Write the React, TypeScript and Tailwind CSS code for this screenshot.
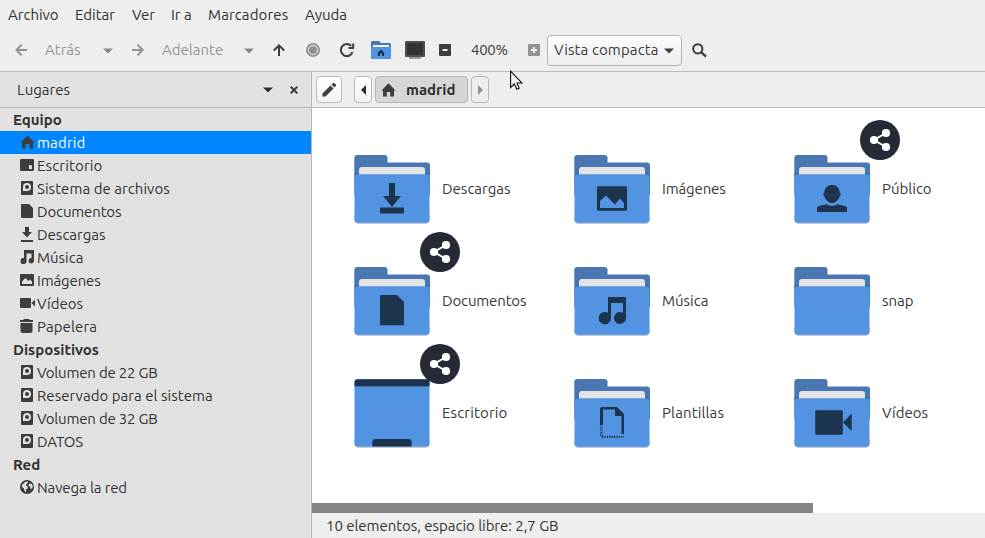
import type { ReactNode } from 'react';

type PlaceKind = 'home' | 'desktop' | 'disk' | 'doc' | 'down' | 'music' | 'image' | 'video' | 'trash' | 'globe';

function PlaceIcon({ kind }: { kind: PlaceKind }) {
  const glyphs: Record<PlaceKind, ReactNode> = {
    home: <path d="M7.5 .5 14.5 7.5H13v6H9.5V9h-4v4.500H2v-6H.5z" />,
    desktop: <path fillRule="evenodd" d="M1 1h12a1 1 0 0 1 1 1v10a1 1 0 0 1-1 1H1a1 1 0 0 1-1-1V2a1 1 0 0 1 1-1zM9 7v4h3V8l-1-1z" />,
    disk: (
      <path
        fillRule="evenodd"
        d="M2 0h10a1 1 0 0 1 1 1v12a1 1 0 0 1-1 1H2a1 1 0 0 1-1-1V1a1 1 0 0 1 1-1zM7 2a4 4 0 0 0-4 4v4h4a4 4 0 0 0 0-8zM7 4a2 2 0 1 1 0 4 2 2 0 0 1 0-4z"
      />
    ),
    doc: <path d="M2 0h7l4 4v9a1 1 0 0 1-1 1H2a1 1 0 0 1-1-1V1a1 1 0 0 1 1-1z" />,
    down: <path d="M5 0h4v5h3L7 10.500 2 5h3zM1 13h12v2H1z" />,
    music: <path d="M5 0h9v10.500A2.700 2.700 0 1 1 11.500 8V3.500h-5v7A3 3 0 1 1 4 8V0z" />,
    image: <path fillRule="evenodd" d="M1 1h12a1 1 0 0 1 1 1v10a1 1 0 0 1-1 1H1a1 1 0 0 1-1-1V2a1 1 0 0 1 1-1zM2 11h10V8.500l-2-2L8.500 8 5.500 5 2 8.500z" />,
    video: <path d="M1 2h9a1 1 0 0 1 1 1v8a1 1 0 0 1-1 1H1a1 1 0 0 1-1-1V3a1 1 0 0 1 1-1zM11.500 7 15 3.500v7z" />,
    trash: <path d="M4 0h5l1 1h3v2H0V1h3zM.5 4h12v7.500a2.500 2.500 0 0 1-2.500 2.500H3a2.500 2.500 0 0 1-2.500-2.500z" />,
    globe: (
      <g>
        <circle cx="7" cy="7" r="7" />
        <path fill="#e1e1e1" d="M2 5l3-3 3-.500-.5 2L5.500 5l1.500 1 1 2-2 1.500v3L4.500 11 4 8.500 2 7zM9 4l2.500-.5L13 6.500l-1.500 2.500L10 8l.5-1.500L8.500 6z" />
      </g>
    ),
  };
  return (
    <svg width="16" height="15" viewBox="0 0 16 15" className="shrink-0" fill="#3d3d3d">
      {glyphs[kind]}
    </svg>
  );
}

function Heading({ children }: { children: ReactNode }) {
  return <div className="h-[23px] pl-[13px] font-bold leading-[23px]">{children}</div>;
}

function Place({ kind, label, selected, tracking = '' }: { kind: PlaceKind; label: string; selected?: boolean; tracking?: string }) {
  return (
    <div className={selected ? 'flex h-[23px] items-center gap-px bg-[#0086ff] pl-5 text-white' : 'flex h-[23px] items-center gap-px pl-5'}>
      <PlaceIcon kind={kind} />
      <span className={`whitespace-nowrap leading-[23px] ${tracking}`}>{label}</span>
    </div>
  );
}

type Emblem = 'down' | 'image' | 'person' | 'doc' | 'music' | 'none' | 'template' | 'video';

function EmblemShape({ kind }: { kind: Emblem }) {
  if (kind === 'down') return <path d="M35 28h6v13h6L38 52 29 41h6zM26 52.500h24v6H26z" />;
  if (kind === 'doc') return <path d="M27 28h16l7 7v22a1.300 1.300 0 0 1-1.300 1.300H27.300A1.300 1.300 0 0 1 26 57V29a1 1 0 0 1 1-1z" />;
  if (kind === 'image')
    return <path fillRule="evenodd" d="M24.500 31.300h27A1.500 1.500 0 0 1 53 32.800v21.400a1.500 1.500 0 0 1-1.500 1.500h-27a1.500 1.500 0 0 1-1.500-1.500V32.800a1.500 1.500 0 0 1 1.500-1.500zM26 53h24v-5l-4-4.500-5 6-9-9-6 5.500z" />;
  if (kind === 'music')
    return <path d="M34 30h18v21a6 6 0 1 1-3-5.200V36H37v15a6.200 6.200 0 1 1-3-5.200z" />;
  if (kind === 'person')
    return <path d="M38 30c5 0 7.700 3.500 7.700 7.500L47 39l-1.500 3c-1.500 3.500-4.500 6-7.500 6s-6-2.500-7.500-6L29 39l1.300-1.500c0-4 2.700-7.500 7.700-7.500zM33 49.300c3 2.200 7 2.200 10 0l8 1.700c1.300.4 2 1.200 2 2V56a1 1 0 0 1-1 1H24a1 1 0 0 1-1-1v-3c0-.8.700-1.600 2-2z" />;
  if (kind === 'template')
    return (
      <g>
        <path d="M27.500 28H43l7 7v20h-2.500V37H41v-6.500H29V46h-3V29.500A1.500 1.500 0 0 1 27.500 28z" />
        <path d="M26.500 46v12M28 57.300h20" fill="none" stroke="#1d344f" strokeWidth="1.200" strokeDasharray="1.200 1.200" />
        <path d="M28 46.800v12M27 58.300h21M49.400 56v3" fill="none" stroke="#1d344f" strokeWidth="1.200" strokeDasharray="1.200 1.200" strokeDashoffset="1.200" />
      </g>
    );
  if (kind === 'video')
    return <path d="M22.500 31.300h25a1.300 1.300 0 0 1 1.300 1.300v21.800a1.300 1.300 0 0 1-1.300 1.300h-25a1.300 1.300 0 0 1-1.300-1.300V32.600a1.300 1.300 0 0 1 1.300-1.300zM49 43.500l8.700-9V52z" />;
  return null;
}

function FolderArt({ kind }: { kind: Emblem }) {
  return (
    <svg width="76" height="69" viewBox="0 0 76 69" className="shrink-0">
      <path d="M.5 60h75v5a3.500 3.500 0 0 1-3.500 3.700H4A3.500 3.500 0 0 1 .5 65z" fill="#9db4cf" />
      <path d="M3.500 0h27A3 3 0 0 1 33.500 3v4.500H73a3 3 0 0 1 3 3V40H.3V3.200A3.200 3.200 0 0 1 3.500 0z" fill="#4877b1" />
      <path d="M.5 23v-2q0-2.500 2.500-2.500h70.500q2 0 2 2.500v2z" fill="#315f98" />
      <path d="M8 12h60a3 3 0 0 1 3 3v8H5v-8a3 3 0 0 1 3-3z" fill="#e4e4e4" />
      <path d="M3.500 19.300h69a3 3 0 0 1 3 3v42a3.200 3.200 0 0 1-3.200 3.200H3.700A3.200 3.200 0 0 1 .5 64.300v-42a3 3 0 0 1 3-3z" fill="#5294e2" />
      <g fill="#1d344f"><EmblemShape kind={kind} /></g>
    </svg>
  );
}

function DesktopArt() {
  return (
    <svg width="76" height="69" viewBox="0 0 76 69" className="shrink-0">
      <path d="M.5 60h75v5a3.500 3.500 0 0 1-3.500 3.700H4A3.500 3.500 0 0 1 .5 65z" fill="#b5bdc8" />
      <rect x=".5" y=".3" width="75" height="67.200" rx="3.200" fill="#5294e2" />
      <path d="M3.700.3h68.600a3.200 3.200 0 0 1 3.200 3.200V7H.5V3.500A3.200 3.200 0 0 1 3.700.3z" fill="#1d344f" />
      <path d="M.5 7h75v.8H.5z" fill="#3d6ca5" />
      <path d="M18.300 67.500V63a3 3 0 0 1 3-3h33.400a3 3 0 0 1 3 3v4.500z" fill="#1d344f" />
    </svg>
  );
}

function ShareBadge() {
  return (
    <svg width="40" height="40" viewBox="0 0 40 40" className="absolute -top-[35px] left-[66px]">
      <circle cx="20" cy="20" r="20" fill="#252a35" />
      <path d="M26 13 14 20l12 7" fill="none" stroke="#fff" strokeWidth="2" />
      <g fill="#fff">
        <circle cx="14" cy="20" r="4.100" />
        <circle cx="26" cy="13" r="4.100" />
        <circle cx="26" cy="27" r="4.100" />
      </g>
    </svg>
  );
}

function Item({ label, children, shared, tracking = '' }: { label: string; children: ReactNode; shared?: boolean; tracking?: string }) {
  return (
    <div className="relative flex h-[69px] items-center gap-3">
      {children}
      <span className={`whitespace-nowrap pb-0.5 text-[#383838] ${tracking}`}>{label}</span>
      {shared && <ShareBadge />}
    </div>
  );
}

function Caret({ className, fill }: { className: string; fill: string }) {
  return (
    <svg width="10" height="6" viewBox="0 0 10 6" className={className} fill={fill}>
      <path d="M0 .5h10L5 5.500z" />
    </svg>
  );
}

function Toolbar() {
  return (
    <div className="flex h-[41px] items-center pt-px pb-1 text-[#969696]">
      <svg width="12" height="12" viewBox="0 0 12 12" className="mt-0.5 ml-[15px] shrink-0" fill="none" stroke="#929292" strokeWidth="2">
        <path d="M6 .8.9 6 6 11.200M1 6h11" transform="translate(.6)" />
      </svg>
      <span className="ml-[18px] w-[58px] pt-0.5">Atrás</span>
      <Caret className="mt-1 shrink-0" fill="#888" />
      <svg width="12" height="12" viewBox="0 0 12 12" className="mt-0.5 ml-[19px] shrink-0" fill="none" stroke="#929292" strokeWidth="2">
        <path d="M5.500.8 10.600 6 5.500 11.200M0 6h10.500" />
      </svg>
      <span className="ml-[18px] w-[82px] pt-0.5">Adelante</span>
      <Caret className="mt-1 shrink-0" fill="#888" />
      <svg width="12" height="12" viewBox="0 0 12 12" className="mt-0.5 ml-[19px] shrink-0" fill="none" stroke="#3d3d3d" strokeWidth="2">
        <path d="M.8 6.500 6 1.400l5.200 5.100M6 1.500V12" />
      </svg>
      <svg width="14" height="14" viewBox="0 0 14 14" className="mt-0.5 ml-[21px] shrink-0">
        <circle cx="7" cy="7" r="6" fill="none" stroke="#929292" strokeWidth="2" />
        <circle cx="7" cy="7" r="4.100" fill="#929292" />
      </svg>
      <svg width="15" height="14" viewBox="0 0 15 14" className="mt-0.5 ml-5 shrink-0" fill="none" stroke="#3d3d3d" strokeWidth="2">
        <path d="M12.500 9.200A6 6 0 1 1 11.200 2.900" />
        <path d="M13.200.5V5H8.500" />
      </svg>
      <svg width="20" height="18" viewBox="0 0 20 18" className="mt-0.5 ml-4 shrink-0">
        <path d="M1 0h7.500l1 2H19l1 1v6H0V1z" fill="#4877b1" />
        <path d="M2 4h16v2H2z" fill="#f1f3f6" />
        <path d="M0 6h20v11.500q0 .5-.5.5H.5q-.5 0-.5-.5z" fill="#5294e2" />
        <path d="M10 8.500 14 12.500h-1V15h-2v-2.500H9V15H7v-2.500H6z" fill="#1d344f" />
      </svg>
      <svg width="20" height="18" viewBox="0 0 20 18" className="mt-0.5 ml-3.5 shrink-0">
        <path d="M4 15h12v3H4z" fill="#999" />
        <rect width="20" height="16" rx=".8" fill="#4f4f4f" />
        <path d="M2 2h16v12H2z" fill="#333" />
      </svg>
      <svg width="12" height="12" viewBox="0 0 12 12" className="mt-0.5 ml-3.5 shrink-0">
        <rect width="12" height="12" rx="1" fill="#3d3d3d" />
        <path d="M3.500 5h5v2h-5z" fill="#eee" />
      </svg>
      <span className="ml-5 w-[57px] pt-0.5 tracking-[-0.3px] text-[#3c3c3c]">400%</span>
      <svg width="12" height="12" viewBox="0 0 12 12" className="mt-0.5 shrink-0">
        <rect width="12" height="12" rx="1" fill="#929292" />
        <path d="M5 3h2v2h2v2H7v2H5V7H3V5h2z" fill="#eee" />
      </svg>
      <div className="mt-0.5 ml-[7px] flex h-[31px] w-[135px] shrink-0 items-center justify-between rounded-[4px] border border-[#b4b4b4] bg-gradient-to-b from-[#fdfdfd] to-[#ececec] pr-[7px] pl-1.5 text-[#3c3c3c]">
        <span className="whitespace-nowrap tracking-[0.12px]">Vista compacta</span>
        <Caret className="mt-0.5" fill="#3d3d3d" />
      </div>
      <svg width="15" height="15" viewBox="0 0 15 15" className="mt-0.5 ml-2.5 shrink-0" fill="none" stroke="#3d3d3d">
        <circle cx="5.800" cy="5.800" r="4.600" strokeWidth="2" />
        <path d="m9 9 5 4.700" strokeWidth="2.400" />
      </svg>
    </div>
  );
}

function PathBar() {
  return (
    <div className="flex h-9 items-center border-b border-[#b9b9b9] pl-1">
      <div className="flex h-[27px] w-[26px] items-center justify-center rounded-[4px] border border-[#b9b9b9] bg-gradient-to-b from-white to-[#f2f2f2]">
        <svg width="14" height="14" viewBox="0 0 14 14" fill="#3d3d3d">
          <path d="M8.500 2.500 11.500 5.500 3.500 13.500H.5v-3zM9.500 1.500 11 0q.7-.5 1.400.2l1.400 1.400q.5.700 0 1.400L12.500 4.500z" />
        </svg>
      </div>
      <div className="ml-3 flex h-[27px] w-[18px] items-center justify-center rounded-[4px] border border-[#b9b9b9] bg-gradient-to-b from-white to-[#f2f2f2]">
        <svg width="5" height="10" viewBox="0 0 5 10" fill="#2d2d2d"><path d="M5 0v10L0 5z" /></svg>
      </div>
      <div className="ml-[3px] flex h-[27px] w-[93px] items-center rounded-[4px] border border-[#b4b4b4] bg-[#d6d6d6] pl-[5px]">
        <svg width="15" height="14" viewBox="0 0 15 14" fill="#3d3d3d"><path d="M7.500.3 14.500 7.500H13v6H9.200V9H5.800v4.500H2v-6H.5z" /></svg>
        <span className="ml-2.5 pt-px font-bold text-[#2e2e2e]">madrid</span>
      </div>
      <div className="ml-[3px] flex h-[27px] w-[18px] items-center justify-center rounded-[4px] border border-[#b9b9b9]">
        <svg width="5" height="10" viewBox="0 0 5 10" fill="#929292"><path d="M0 0v10L5 5z" /></svg>
      </div>
    </div>
  );
}

export default function App() {
  return (
    <div className="relative flex h-[538px] w-[985px] flex-col overflow-hidden bg-[#eee] font-['Ubuntu','Noto_Sans',sans-serif] text-[15px] leading-[20px] text-[#333]">
      <div className="flex h-[30px] items-center whitespace-nowrap text-[#303030]">
        <span className="ml-2 w-[67px]">Archivo</span>
        <span className="w-[57px]">Editar</span>
        <span className="w-[39px]">Ver</span>
        <span className="w-[37px]">Ir a</span>
        <span className="w-[97px] tracking-[0.12px]">Marcadores</span>
        <span>Ayuda</span>
      </div>
      <Toolbar />
      <div className="flex h-[467px] border-t border-[#b9b9b9]">
        <aside className="w-[312px] shrink-0 border-r border-[#b9b9b9] bg-[#e1e1e1]">
          <div className="flex h-9 items-center border-b border-[#b9b9b9] pl-[17px]">
            <span className="w-[246px]">Lugares</span>
            <Caret className="shrink-0" fill="#2d2d2d" />
            <svg width="8" height="8" viewBox="0 0 8 8" className="ml-[17px]" fill="none" stroke="#3d3d3d" strokeWidth="2">
              <path d="m.7.7 6.600 6.600m0-6.600L.7 7.300" />
            </svg>
          </div>
          <Heading>Equipo</Heading>
          <Place kind="home" label="madrid" selected tracking="tracking-[0.15px]" />
          <Place kind="desktop" label="Escritorio" tracking="tracking-[0.15px]" />
          <Place kind="disk" label="Sistema de archivos" tracking="tracking-[0.05px]" />
          <Place kind="doc" label="Documentos" tracking="tracking-[-0.15px]" />
          <Place kind="down" label="Descargas" />
          <Place kind="music" label="Música" />
          <Place kind="image" label="Imágenes" tracking="tracking-[-0.15px]" />
          <Place kind="video" label="Vídeos" />
          <Place kind="trash" label="Papelera" tracking="tracking-[0.1px]" />
          <Heading>Dispositivos</Heading>
          <Place kind="disk" label="Volumen de 22 GB" tracking="tracking-[-0.2px]" />
          <Place kind="disk" label="Reservado para el sistema" tracking="tracking-[0.04px]" />
          <Place kind="disk" label="Volumen de 32 GB" tracking="tracking-[-0.2px]" />
          <Place kind="disk" label="DATOS" tracking="tracking-[-0.2px]" />
          <Heading>Red</Heading>
          <Place kind="globe" label="Navega la red" tracking="tracking-[-0.12px]" />
        </aside>
        <main className="flex w-[673px] flex-col">
          <PathBar />
          <div className="grid h-[395px] grid-cols-[220px_220px_180px] content-start gap-y-[43px] bg-white pt-[47px] pl-[42px]">
            <Item label="Descargas"><FolderArt kind="down" /></Item>
            <Item label="Imágenes" tracking="tracking-[-0.15px]"><FolderArt kind="image" /></Item>
            <Item label="Público" shared><FolderArt kind="person" /></Item>
            <Item label="Documentos" shared tracking="tracking-[-0.15px]"><FolderArt kind="doc" /></Item>
            <Item label="Música"><FolderArt kind="music" /></Item>
            <Item label="snap"><FolderArt kind="none" /></Item>
            <Item label="Escritorio" shared tracking="tracking-[0.15px]"><DesktopArt /></Item>
            <Item label="Plantillas" tracking="tracking-[0.12px]"><FolderArt kind="template" /></Item>
            <Item label="Vídeos"><FolderArt kind="video" /></Item>
          </div>
          <div className="h-2.5 bg-white"><div className="h-2.5 w-[501px] bg-[#848484]" /></div>
          <div className="flex h-[25px] items-center pl-3.5">
            <span className="whitespace-nowrap tracking-[-0.04px]">10 elementos, espacio libre: 2,7 GB</span>
          </div>
        </main>
      </div>
      <svg width="13" height="20" viewBox="0 0 13 20" className="absolute top-[70px] left-[510px]">
        <path d="M.6 1.200v16.200L4.300 14l2.500 5.300 2.400-1.100L7 13h5z" fill="#f4f4f4" stroke="#111" strokeWidth="1.100" />
      </svg>
    </div>
  );
}
